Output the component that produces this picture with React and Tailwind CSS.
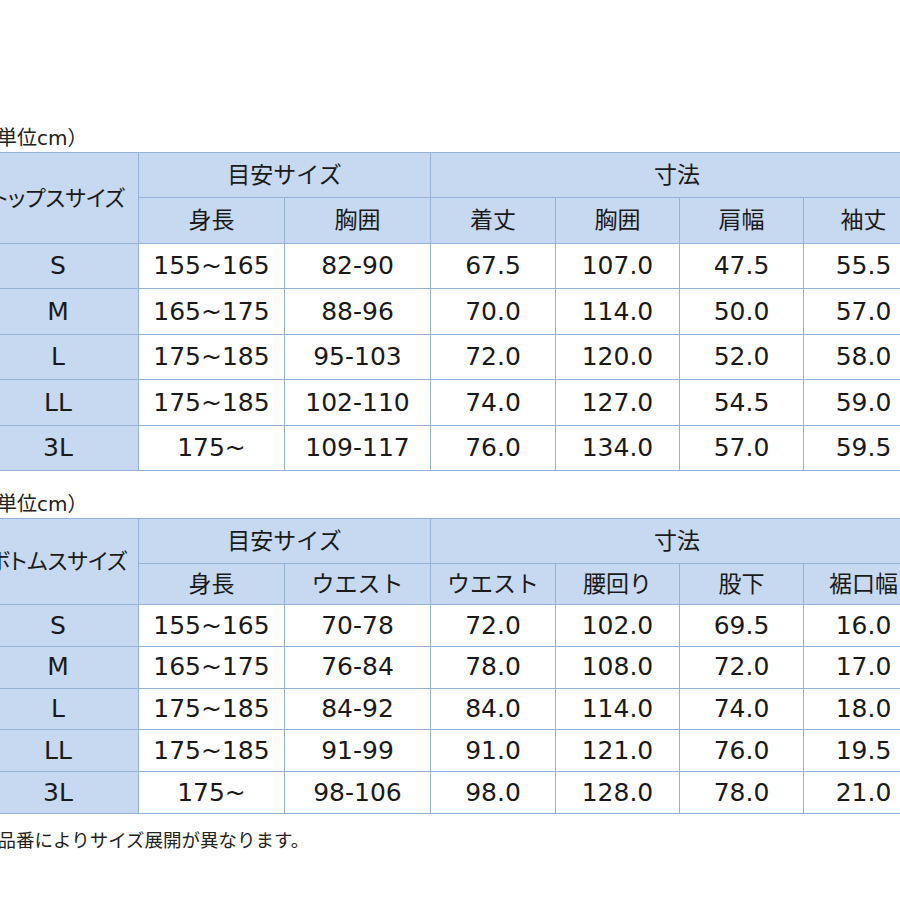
import React from 'react';

const tops = {
  title: 'トップスサイズ',
  guide: ['身長', '胸囲'],
  dims: ['着丈', '胸囲', '肩幅', '袖丈'],
  rows: [
    ['S', '155~165', '82-90', '67.5', '107.0', '47.5', '55.5'],
    ['M', '165~175', '88-96', '70.0', '114.0', '50.0', '57.0'],
    ['L', '175~185', '95-103', '72.0', '120.0', '52.0', '58.0'],
    ['LL', '175~185', '102-110', '74.0', '127.0', '54.5', '59.0'],
    ['3L', '175~', '109-117', '76.0', '134.0', '57.0', '59.5'],
  ],
};

const bottoms = {
  title: 'ボトムスサイズ',
  guide: ['身長', 'ウエスト'],
  dims: ['ウエスト', '腰回り', '股下', '裾口幅'],
  rows: [
    ['S', '155~165', '70-78', '72.0', '102.0', '69.5', '16.0'],
    ['M', '165~175', '76-84', '78.0', '108.0', '72.0', '17.0'],
    ['L', '175~185', '84-92', '84.0', '114.0', '74.0', '18.0'],
    ['LL', '175~185', '91-99', '91.0', '121.0', '76.0', '19.5'],
    ['3L', '175~', '98-106', '98.0', '128.0', '78.0', '21.0'],
  ],
};

const cell = 'border border-[#95b3d7] text-center align-middle p-0';
const head = `${cell} bg-[#c6d9f1] text-[23px]`;

function SizeTable({ data, headH, subH, rowH }) {
  return (
    <table className="border-collapse table-fixed w-[946px] text-[#1a1a1a]">
      <colgroup>
        <col className="w-[161px]" />
        <col className="w-[146px]" />
        <col className="w-[146px]" />
        <col className="w-[125px]" />
        <col className="w-[124px]" />
        <col className="w-[124px]" />
        <col className="w-[120px]" />
      </colgroup>
      <thead>
        <tr className={headH}>
          <th
            rowSpan={2}
            className={`${cell} bg-[#c6d9f1] text-[22px] font-normal whitespace-nowrap [font-feature-settings:'palt']`}
          >
            {data.title}
          </th>
          <th colSpan={2} className={`${head} font-normal`}>目安サイズ</th>
          <th colSpan={4} className={`${head} font-normal`}>寸法</th>
        </tr>
        <tr className={subH}>
          {data.guide.concat(data.dims).map((t, i) => (
            <th key={i} className={`${head} font-normal whitespace-nowrap`}>{t}</th>
          ))}
        </tr>
      </thead>
      <tbody>
        {data.rows.map((r) => (
          <tr key={r[0]} className={rowH}>
            {r.map((v, i) => (
              <td
                key={i}
                className={`${cell} text-[25px] whitespace-nowrap ${i === 0 ? 'bg-[#c6d9f1]' : 'bg-white'}`}
              >
                {v}
              </td>
            ))}
          </tr>
        ))}
      </tbody>
    </table>
  );
}

export default function App() {
  return (
    <div
      className="w-[900px] h-[900px] overflow-hidden bg-white"
      style={{ fontFamily: '"DejaVu Sans", "Noto Sans CJK JP", sans-serif' }}
    >
      <div className="ml-[-23px] pt-[124px] flex flex-col">
        <p className="h-[28px] text-[20px] leading-[28px] text-[#222]">（単位cm）</p>
        <SizeTable data={tops} headH="h-[45px]" subH="h-[46px]" rowH="h-[45.4px]" />

        <p className="mt-[20px] h-[27px] text-[20px] leading-[27px] text-[#222]">（単位cm）</p>
        <SizeTable data={bottoms} headH="h-[45px]" subH="h-[41px]" rowH="h-[41.8px]" />

        <p className="mt-[13px] ml-[5px] text-[18.5px] leading-[27px] text-[#222]">※品番によりサイズ展開が異なります。</p>
      </div>
    </div>
  );
}
